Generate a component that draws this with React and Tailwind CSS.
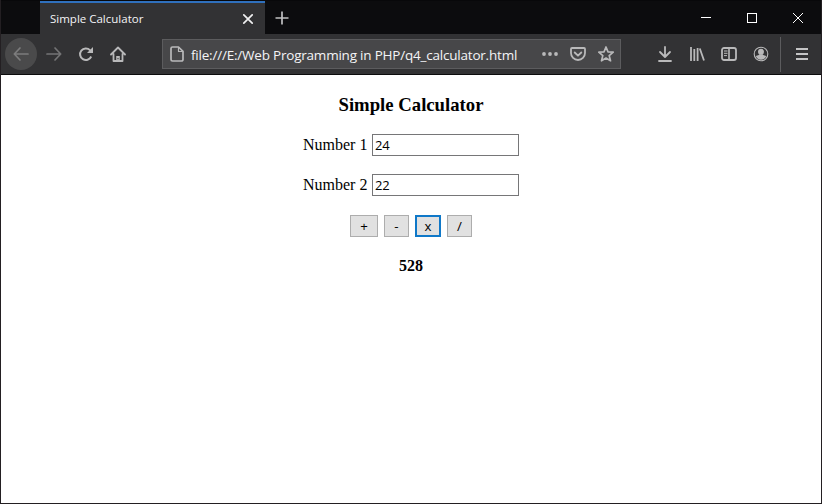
import React from "react";

function Icon({ children, color = "text-[#b9b9ba]", className = "" }) {
  return (
    <svg width="16" height="16" viewBox="0 0 16 16" fill="none" stroke="currentColor" strokeWidth="2" strokeLinecap="round" strokeLinejoin="round" className={`block shrink-0 ${color} ${className}`}>
      {children}
    </svg>
  );
}

function TitleBar() {
  return (
    <div className="flex h-[34px] shrink-0 border-t border-[#08080a] bg-[#0c0c0e]">
      <div className="ml-[39px] flex w-[225px] items-center border-t-2 border-[#2f70bd] bg-[#323234] pr-[9px] pl-[10px]">
        <span className="grow whitespace-nowrap pt-px font-['Open_Sans',sans-serif] text-[11.5px] leading-4 text-[#f4f4f6]">Simple Calculator</span>
        <Icon color="text-[#f0f0f1]"><path d="M3.8 3.8l8.4 8.4M12.2 3.8l-8.4 8.4" strokeWidth="1.7" /></Icon>
      </div>
      <div className="ml-[9px] flex items-center">
        <Icon color="text-[#c0c0c1]"><path d="M8 1.5v13M1.5 8h13" strokeWidth="1.7" strokeLinecap="butt" /></Icon>
      </div>
      <div className="ml-auto flex items-center gap-[30px] pr-[15px]">
        <Icon color="text-white"><path d="M3 7.5h10" strokeWidth="1" strokeLinecap="butt" /></Icon>
        <Icon color="text-white"><path d="M3.5 3.5h9v9h-9z" strokeWidth="1" strokeLinejoin="miter" shapeRendering="crispEdges" /></Icon>
        <Icon color="text-white"><path d="M3 3l10 10M13 3L3 13" strokeWidth="1" strokeLinecap="butt" /></Icon>
      </div>
    </div>
  );
}

function Toolbar() {
  return (
    <div className="flex h-[41px] shrink-0 items-center border-b border-[#0c0c0d] bg-[#323234]">
      <div className="ml-[4px] flex size-8 items-center justify-center rounded-full bg-[#4a4a4b]">
        <Icon color="text-[#7c7c7d]"><path d="M15 8H1.5M7 2L1.3 8L7 14" strokeWidth="1.7" /></Icon>
      </div>
      <Icon color="text-[#747475]" className="ml-[9px]"><path d="M1 8h13.5M9 2l5.7 6L9 14" strokeWidth="1.7" /></Icon>
      <Icon className="ml-4"><path d="M13.2 10.5A5.8 5.8 0 1 1 12 4.1L14 6" strokeLinecap="butt" /><path d="M15 1v6H9z" fill="currentColor" stroke="none" /></Icon>
      <Icon className="ml-4">
        <path d="M1 8.5l7-7 7 7M3.5 8v7h9V8" strokeWidth="1.8" />
        <path d="M6.2 15v-5h3.6v5z" fill="currentColor" stroke="none" />
        <path d="M8 12v1.2" stroke="#323234" strokeWidth="1" strokeLinecap="butt" />
      </Icon>
      <div className="ml-[36px] flex h-[30px] w-[459px] items-center border border-[#5c5c5e] bg-[#474749] pr-[6px] pl-[6px]">
        <Icon><path d="M4 1h5.5L14 5.3V13.5a1.5 1.5 0 0 1-1.5 1.5h-9A1.5 1.5 0 0 1 2 13.5V2.5A1.5 1.5 0 0 1 3.5 1z" strokeWidth="1.7" /><path d="M9.5 1.5V5.5H13.5" strokeWidth="1.2" /></Icon>
        <span className="ml-[6px] grow whitespace-nowrap pt-px font-['Open_Sans',sans-serif] text-[13.5px] leading-5 tracking-[-0.21px] text-[#f4f4f6]">file:///E:/Web Programming in PHP/q4_calculator.html</span>
        <div className="flex gap-3">
          <Icon>
            <g fill="currentColor" stroke="none"><circle cx="2" cy="8" r="1.9" /><circle cx="8" cy="8" r="1.9" /><circle cx="14" cy="8" r="1.9" /></g>
          </Icon>
          <Icon><path d="M2 2h12a1 1 0 0 1 1 1v4a7 7 0 0 1-14 0V3a1 1 0 0 1 1-1zM4.7 6.5L8 9.7l3.3-3.2" strokeWidth="1.8" /></Icon>
          <Icon><path d="M8 1l2 4.8 5.2.4-4 3.4 1.3 5.2L8 12l-4.5 2.8 1.3-5.2-4-3.4L6 5.8z" strokeWidth="1.7" /></Icon>
        </div>
      </div>
      <div className="ml-9 flex gap-4">
        <Icon><path d="M8 1v9.5M3 6l5 5 5-5M2 15h12" strokeWidth="1.8" /></Icon>
        <Icon><path d="M2 1v14M5.3 3v12M8.6 2v13M10.8 2.5l4.2 12" strokeWidth="1.8" strokeLinecap="butt" /></Icon>
        <Icon><rect x="1" y="2" width="14" height="12" rx="2" strokeWidth="1.8" /><path d="M8 2v12" strokeWidth="1.6" /><path d="M3 5h3.5M3 7.3h3.5M3 9.6h3" strokeWidth="1" strokeLinecap="butt" /></Icon>
        <Icon>
          <circle cx="8" cy="8" r="6.8" strokeWidth="1.1" />
          <circle cx="8" cy="5.8" r="3" fill="currentColor" stroke="none" />
          <path d="M2.8 10C5 9.4 6 9 6.3 8.3h3.4C10 9 11 9.4 13.2 10A5.5 5.5 0 0 1 2.8 10z" fill="currentColor" stroke="none" />
        </Icon>
      </div>
      <div className="ml-[11px] h-[35px] w-px bg-[#5c5c5e]" />
      <Icon color="text-[#c4c4c5]" className="ml-[13px]"><path d="M2 3h12M2 8h12M2 13h12" strokeWidth="2" strokeLinecap="butt" /></Icon>
    </div>
  );
}

function NumberField({ label, value }) {
  return (
    <label className="flex h-[22px] items-center">
      <span className="w-[69px] whitespace-nowrap text-base leading-5">{label}</span>
      <input defaultValue={value} className="h-[22px] w-[147px] border border-[#767678] bg-white pl-[2px] font-['Open_Sans',sans-serif] text-[13px] leading-4 tracking-[-0.2px] outline-none" />
    </label>
  );
}

const buttonBase = "flex h-[22px] items-center justify-center bg-[#e1e1e1] font-['Open_Sans',sans-serif] text-[13.3px] leading-4";

export default function App() {
  return (
    <div className="flex h-[504px] w-[822px] flex-col overflow-hidden border border-t-0 border-[#231f22] bg-white text-black">
      <TitleBar />
      <Toolbar />
      <main className="flex flex-col items-center font-['Liberation_Serif',serif]">
        <h1 className="mt-5 text-[18.72px] leading-5 font-bold">Simple Calculator</h1>
        <div className="mt-[19px] flex flex-col gap-[18px]">
          <NumberField label="Number 1" value="24" />
          <NumberField label="Number 2" value="22" />
        </div>
        <div className="mt-[19px] flex gap-[6px]">
          <button className={`${buttonBase} w-[28px] border border-[#adadad]`}>+</button>
          <button className={`${buttonBase} w-[25px] border border-[#adadad]`}>-</button>
          <button className={`${buttonBase} w-[26px] border-2 border-[#0f78c8]`}>x</button>
          <button className={`${buttonBase} w-[25px] border border-[#adadad]`}>/</button>
        </div>
        <output className="mt-[19px] text-base leading-5 font-bold">528</output>
      </main>
    </div>
  );
}
